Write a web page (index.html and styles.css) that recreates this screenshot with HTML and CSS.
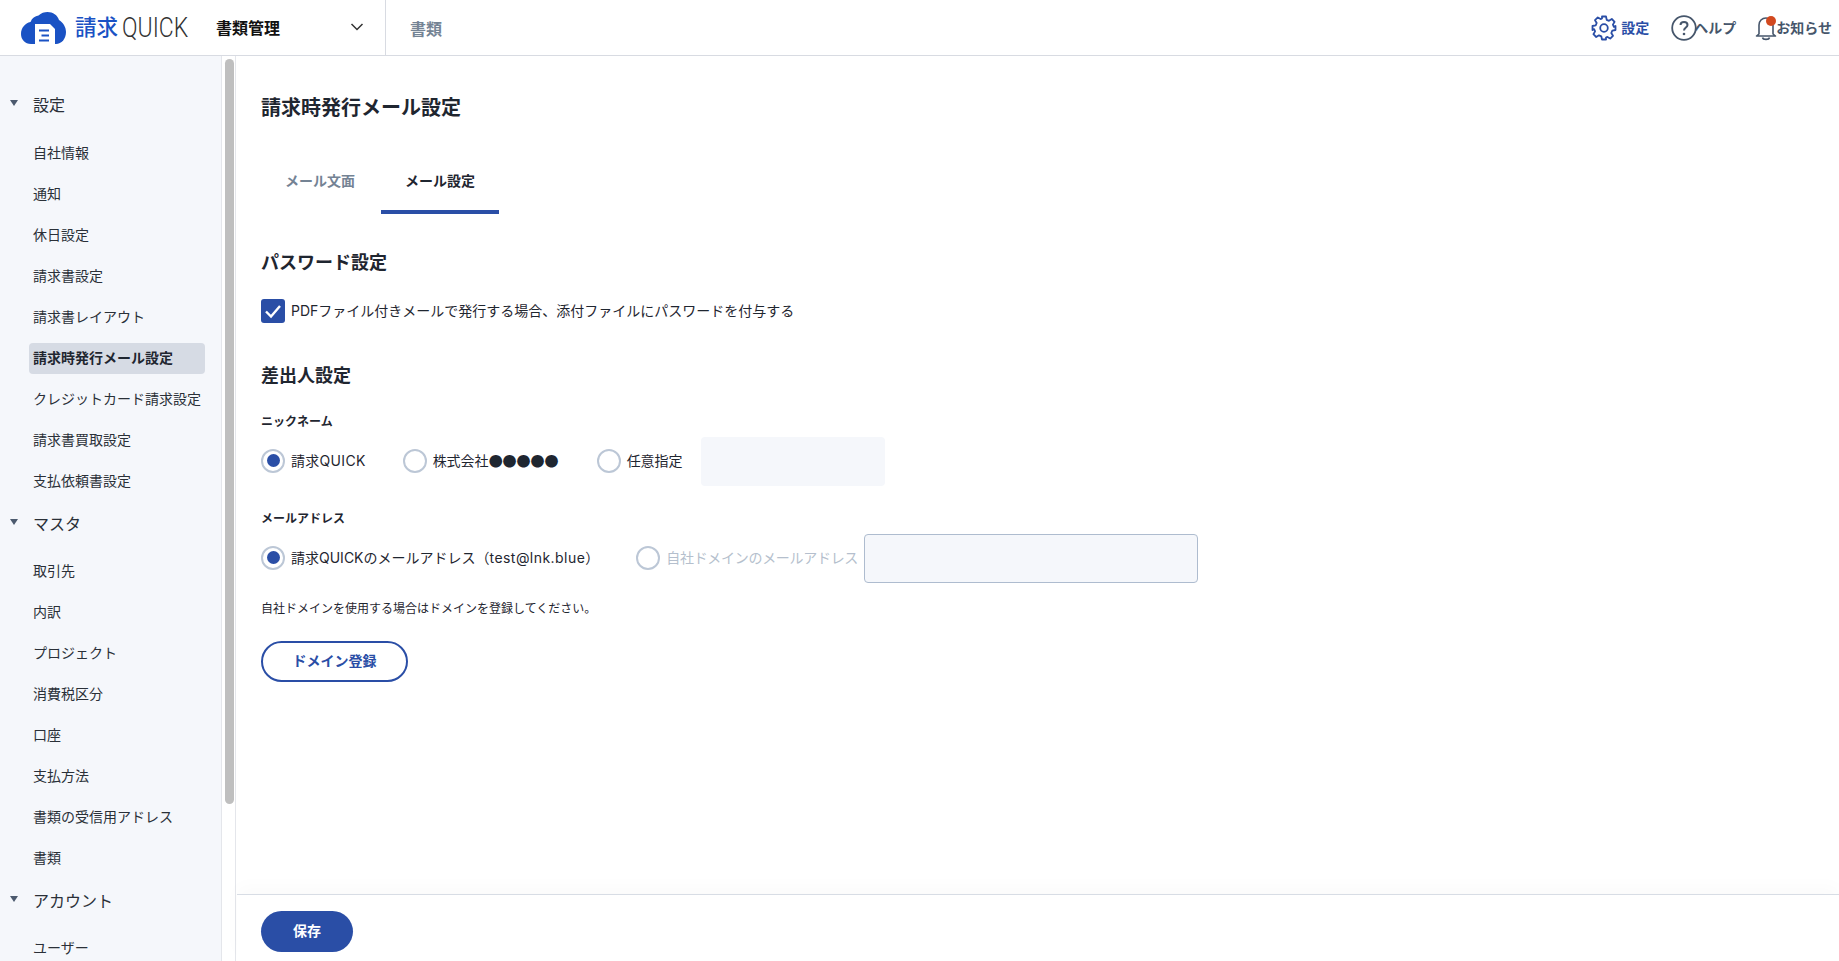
FILE: index.html
```html
<!DOCTYPE html>
<html lang="ja">
<head>
<meta charset="utf-8">
<title>請求時発行メール設定</title>
<link rel="stylesheet" href="styles.css">
</head>
<body>
<header class="topbar">
  <div class="logo">
    <svg class="logo-mark" viewBox="0 0 46 32" width="46" height="32" aria-hidden="true">
      <path fill="#1a52c4" d="M10 32C4 32 0 27.500 0 22C0 16 4 11 9.500 10C11 6 14 4 17.500 3.500C20 1 23.500 0 26.500 0C32 0 36.500 3 38 8C42 10.500 45 15 45 20C45 27 40.500 32 35 32Z"/>
      <path fill="#fff" d="M14 12H29L34 17V32H14Z"/>
      <path fill="#1a52c4" d="M18 17.500H28V19.500H18ZM20.500 22.500H28V24.500H20.500ZM18 27.500H28V29.500H18Z"/>
    </svg>
    <span class="logo-ja">請求</span><span class="logo-en">QUICK</span>
  </div>
  <div class="doc-select">
    <span>書類管理</span>
    <svg viewBox="0 0 14 8" width="14" height="8" aria-hidden="true"><path d="M1.500 1L7 6.500L12.500 1" fill="none" stroke="#333" stroke-width="1.500"/></svg>
  </div>
  <div class="top-link">書類</div>
  <nav class="top-actions">
    <a class="action action-blue">
      <svg viewBox="0 0 26 26" width="26" height="26" aria-hidden="true"><g fill="none" stroke="#2a4ea6" stroke-width="1.800" stroke-linejoin="round"><path d="M11 1.500H15L15.700 4.800L18 5.800L20.800 4L23.600 6.800L21.900 9.600L22.900 11.900L24.500 11V15L21.300 15.700L20.300 18L22 20.800L19.200 23.600L16.400 21.900L15 22.500L15 24.500H11L10.300 21.300L8 20.300L5.200 22L2.400 19.200L4.100 16.400L3.100 14.100L1.500 15V11L4.700 10.300L5.700 8L4 5.200L6.800 2.400L9.600 4.100L11 3.500Z"/><circle cx="13" cy="13" r="3.800"/></g></svg>
      <span>設定</span>
    </a>
    <a class="action action-help">
      <svg viewBox="0 0 26 26" width="26" height="26" aria-hidden="true"><circle cx="13" cy="13" r="11.800" fill="none" stroke="#46566b" stroke-width="1.800"/><path d="M9.500 10C9.500 8 11 7 13 7C15 7 16.500 8.200 16.500 10C16.500 12.500 13 12.500 13 15.500" fill="none" stroke="#46566b" stroke-width="2"/><circle cx="13" cy="19" r="1.300" fill="#46566b"/></svg>
      <span>ヘルプ</span>
    </a>
    <a class="action action-bell">
      <svg viewBox="0 0 22 26" width="22" height="26" aria-hidden="true"><path d="M4 19V10C4 6 7 3 11 3C15 3 18 6 18 10V19L20.500 21H1.500Z" fill="none" stroke="#46566b" stroke-width="1.600" stroke-linejoin="round"/><path d="M7.500 22.500C8 25 14 25 14.500 22.500" fill="none" stroke="#46566b" stroke-width="1.600"/></svg>
      <i class="badge"></i>
      <span>お知らせ</span>
    </a>
  </nav>
</header>

<div class="body-row">
  <aside class="sidebar">
    <div class="side-nav">
      <div class="sec"><i class="tri"></i>設定</div>
      <a class="item">自社情報</a>
      <a class="item">通知</a>
      <a class="item">休日設定</a>
      <a class="item">請求書設定</a>
      <a class="item">請求書レイアウト</a>
      <a class="item active">請求時発行メール設定</a>
      <a class="item">クレジットカード請求設定</a>
      <a class="item">請求書買取設定</a>
      <a class="item">支払依頼書設定</a>
      <div class="sec"><i class="tri"></i>マスタ</div>
      <a class="item">取引先</a>
      <a class="item">内訳</a>
      <a class="item">プロジェクト</a>
      <a class="item">消費税区分</a>
      <a class="item">口座</a>
      <a class="item">支払方法</a>
      <a class="item">書類の受信用アドレス</a>
      <a class="item">書類</a>
      <div class="sec"><i class="tri"></i>アカウント</div>
      <a class="item">ユーザー</a>
    </div>
    <div class="scroll"><div class="thumb"></div></div>
  </aside>

  <main class="main">
    <div class="content">
      <h1 class="title">請求時発行メール設定</h1>
      <div class="tabs">
        <a class="tab">メール文面</a>
        <a class="tab tab-on">メール設定</a>
      </div>
      <h2 class="h2 h2-pass">パスワード設定</h2>
      <label class="check-row">
        <span class="check"><svg viewBox="0 0 24 24" width="24" height="24" aria-hidden="true"><path d="M5 12.500L10 17.500L19 7" fill="none" stroke="#fff" stroke-width="2.400"/></svg></span>
        <span class="check-text">PDFファイル付きメールで発行する場合、添付ファイルにパスワードを付与する</span>
      </label>
      <h2 class="h2 h2-sender">差出人設定</h2>
      <div class="label label-nick">ニックネーム</div>
      <div class="radio-row">
        <span class="radio on"></span><span class="rtext r1">請求QUICK</span>
        <span class="radio"></span><span class="rtext r2">株式会社<span class="cjk">●●●●●</span></span>
        <span class="radio"></span><span class="rtext r3">任意指定</span>
        <span class="input input-nick"></span>
      </div>
      <div class="label label-mail">メールアドレス</div>
      <div class="radio-row">
        <span class="radio on"></span><span class="rtext r4">請求QUICKのメールアドレス<span class="cjk">（</span><span class="addr">test@lnk.blue</span><span class="cjk">）</span></span>
        <span class="radio"></span><span class="rtext r5">自社ドメインのメールアドレス</span>
        <span class="input input-mail"></span>
      </div>
      <p class="note">自社ドメインを使用する場合はドメインを登録してください。</p>
      <button class="btn-outline" type="button">ドメイン登録</button>
    </div>
    <footer class="footer">
      <button class="btn-save" type="button">保存</button>
    </footer>
  </main>
</div>
</body>
</html>
```

FILE: styles.css
```css
* { box-sizing: border-box; }
html, body { margin: 0; height: 100%; overflow: hidden; }
body {
  font-family: Inter, "Noto Sans CJK JP", sans-serif;
  color: #1f2630;
  background: #fff;
  font-size: 14px;
  display: flex;
  flex-direction: column;
}

.topbar {
  height: 56px;
  flex: none;
  display: flex;
  align-items: center;
  border-bottom: 1px solid #d8dbe2;
}
.logo { width: 216px; padding-left: 21px; display: flex; align-items: center; white-space: nowrap; }
.logo-mark { margin-right: 8px; margin-top: 1px; }
.logo-ja { color: #1a52c4; font-size: 21.5px; font-weight: 500; line-height: 1; margin-top: 0; }
.logo-en {
  display: inline-block;
  color: #333;
  font-family: Roboto, sans-serif;
  font-weight: 300;
  font-size: 28px;
  line-height: 1;
  margin: 0 0 0 4px;
  transform: scaleX(.82);
  transform-origin: left center;
}
.doc-select {
  width: 170px;
  height: 55px;
  flex: none;
  display: flex;
  align-items: center;
  justify-content: space-between;
  padding-right: 21px;
  font-size: 16px;
  font-weight: 700;
  color: #111;
  border-right: 1px solid #d8dbe2;
}
.doc-select span { margin-top: -2px; }
.doc-select svg { margin-top: -2px; }
.top-link { margin-left: 24px; font-size: 16px; font-weight: 700; color: #748394; }
.top-actions { margin-left: auto; display: flex; align-items: center; padding-right: 7px; }
.action { display: flex; align-items: center; font-size: 14px; font-weight: 700; color: #46566b; position: relative; }
.action span { margin-top: -2px; }
.action-blue { color: #2a4ea6; gap: 4px; margin-right: 22px; }
.action-help { margin-right: 19px; }
.action-help svg { margin-right: -3px; }
.action-bell svg { margin-right: -1px; }
.badge {
  position: absolute;
  left: 11px;
  top: 1px;
  width: 10px;
  height: 10px;
  border-radius: 50%;
  background: #d2491f;
}

.body-row { flex: 1; display: flex; min-height: 0; }
.sidebar { width: 236px; flex: none; display: flex; border-right: 1px solid #e4e6eb; overflow: hidden; }
.side-nav {
  width: 222px;
  flex: none;
  background: #f5f7fb;
  border-right: 1px solid #e4e6eb;
  padding: 36px 0 0 29px;
  overflow: hidden;
}
.scroll { flex: 1; padding: 3px 2px 0 3px; }
.thumb { width: 9px; height: 745px; background: #bfbfbf; border-radius: 4.5px; }
.sec {
  height: 24px;
  margin: 14px 0 21px 4px;
  display: flex;
  align-items: center;
  font-size: 16px;
  color: #2a3038;
  position: relative;
}
.side-nav > .sec:first-child { margin-top: 0; margin-bottom: 22px; }
.tri {
  position: absolute;
  left: -23px;
  top: 8px;
  border-left: 4px solid transparent;
  border-right: 4px solid transparent;
  border-top: 6px solid #4c5a6e;
}
.item {
  display: flex;
  align-items: center;
  width: 176px;
  height: 31px;
  margin-bottom: 10px;
  padding: 0 0 3px 4px;
  border-radius: 4px;
  font-size: 14px;
  color: #2a3038;
  white-space: nowrap;
}
.item.active { background: #d6dbe4; font-weight: 700; color: #1f2630; }

.main { flex: 1; min-width: 0; display: flex; flex-direction: column; }
.content { flex: 1; padding: 38px 0 0 25px; min-height: 0; }
.title { margin: 0; font-size: 20px; line-height: 28px; font-weight: 700; }
.tabs { display: flex; gap: 2px; margin-top: 33px; }
.tab {
  width: 118px;
  height: 59px;
  padding-top: 16px;
  text-align: center;
  font-size: 14px;
  font-weight: 700;
  color: #748394;
  line-height: 20px;
}
.tab-on { color: #1f2630; border-bottom: 4px solid #2a4ea6; }
.h2 { margin: 0; font-size: 18px; line-height: 26px; font-weight: 700; }
.h2-pass { margin-top: 36px; }
.check-row { display: flex; align-items: center; gap: 6px; margin-top: 23px; height: 24px; font-size: 14px; }
.check { width: 24px; height: 24px; background: #2a4ea6; border-radius: 3px; display: block; }
.check svg { display: block; }
.check-text { margin-top: -2px; }
.h2-sender { margin-top: 40px; }
.label { font-size: 12px; font-weight: 700; line-height: 18px; }
.label-nick { margin-top: 24px; }
.label-mail { margin-top: 24px; }
.radio-row { display: flex; align-items: center; margin-top: 4px; height: 51px; font-size: 14px; }
.radio {
  width: 24px;
  height: 24px;
  flex: none;
  border: 2px solid #bcc7d6;
  border-radius: 50%;
  background: #fff;
  position: relative;
}
.radio.on::after {
  content: "";
  position: absolute;
  inset: 3.5px;
  border-radius: 50%;
  background: #2a4ea6;
}
.cjk { font-family: "Noto Sans CJK JP", sans-serif; }
.addr { letter-spacing: .45px; }
.rtext { margin: -2px 0 0 6px; white-space: nowrap; }
.r1 { margin-right: 37px; letter-spacing: .3px; }
.r2 { margin-right: 38px; }
.r3 { margin-right: 18px; }
.r4 { margin-right: 37px; }
.r5 { color: #b5bfcd; margin-right: 6px; letter-spacing: -.3px; }
.input { display: block; flex: none; margin-top: 2px; height: 49px; background: #f5f7fb; border-radius: 4px; }
.input-nick { width: 184px; }
.input-mail { width: 334px; border: 1px solid #aebccf; }
.note { margin: 17px 0 0; font-size: 12px; line-height: 18px; }
.btn-outline {
  display: block;
  margin-top: 23px;
  width: 147px;
  height: 41px;
  padding: 0 0 3px;
  border: 2px solid #2a4ea6;
  border-radius: 21px;
  background: #fff;
  color: #2a4ea6;
  font: 700 14px Inter, "Noto Sans CJK JP", sans-serif;
}
.footer {
  height: 67px;
  flex: none;
  margin-left: 1px;
  border-top: 1px solid #d8dde5;
  padding: 16px 0 0 24px;
  box-shadow: 0 -8px 16px rgba(40, 50, 70, .02);
}
.btn-save {
  display: block;
  width: 92px;
  height: 41px;
  padding: 0 0 3px;
  border: 0;
  border-radius: 21px;
  background: #2a4ea6;
  color: #fff;
  font: 700 14px Inter, "Noto Sans CJK JP", sans-serif;
}
```
